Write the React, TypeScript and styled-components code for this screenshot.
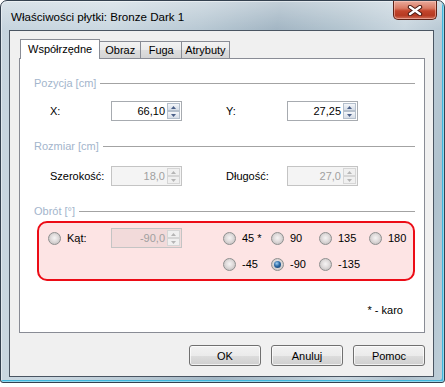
import React from "react";
import styled, { createGlobalStyle } from "styled-components";

const GlobalStyle = createGlobalStyle`
  html, body {
    margin: 0;
    padding: 0;
    background: #ffffff;
  }
  body {
    font-family: "Liberation Sans", Arial, sans-serif;
    font-size: 11px;
    color: #000;
  }
`;

const Window = styled.div`
  width: 445px;
  height: 383px;
  box-sizing: border-box;
  border: 1px solid #34414f;
  border-radius: 7px 7px 3px 3px;
  padding: 0 10px 5px 8px;
  display: flex;
  flex-direction: column;
  background:
    linear-gradient(180deg, rgba(255, 255, 255, 0.35) 0px, rgba(255, 255, 255, 0) 28px),
    linear-gradient(100deg, #c6d4de 0%, #cbd8e1 22%, #b9c9d4 40%, #a3b6c4 55%, #b4c5d0 68%, #c9d6df 80%, #afc1cd 92%, #bfcfd9 100%);
  box-shadow: inset 0 0 0 1px rgba(255, 255, 255, 0.45), inset -2px -2px 0 #3fb6dc;
`;

const TitleBar = styled.div`
  height: 29px;
  display: flex;
  justify-content: space-between;
  align-items: flex-start;
`;

const Title = styled.div`
  margin: 9px 0 0 2px;
  font-size: 11.6px;
  line-height: 14px;
  color: #000;
`;

const CloseButton = styled.div`
  width: 44px;
  height: 19px;
  margin-right: -3px;
  box-sizing: border-box;
  border: 1px solid #5e2116;
  border-top: none;
  border-radius: 0 0 5px 5px;
  background: linear-gradient(180deg, #e9ab9c 0%, #d97a64 40%, #c2452c 55%, #b63a22 80%, #d0705a 100%);
  box-shadow: inset 0 0 0 1px rgba(255, 210, 200, 0.5);
  display: flex;
  align-items: center;
  justify-content: center;
`;

const Client = styled.div`
  flex: 1;
  box-sizing: border-box;
  border: 1px solid #4a5562;
  background: #f0f0f0;
  padding: 8px 8px 9px 9px;
  display: flex;
  flex-direction: column;
`;

const TabRow = styled.div`
  height: 19px;
  display: flex;
  align-items: flex-end;
  padding-left: 1px;
`;

const Tab = styled.div<{ $active?: boolean }>`
  box-sizing: border-box;
  min-width: ${(p) => (p.$active ? "0" : "41px")};
  text-align: center;
  height: ${(p) => (p.$active ? "20px" : "17px")};
  margin-bottom: ${(p) => (p.$active ? "-1px" : "0")};
  position: relative;
  z-index: ${(p) => (p.$active ? 1 : 0)};
  padding: ${(p) => (p.$active ? "2px 7px 0 7px" : "1px 3px 0 3px")};
  border: 1px solid #898c95;
  border-bottom: none;
  border-left-width: ${(p) => (p.$active ? "1px" : "0")};
  background: ${(p) =>
    p.$active ? "#ffffff" : "linear-gradient(180deg, #f3f3f3 0%, #ebebeb 50%, #dedede 51%, #d4d4d4 100%)"};
  line-height: 14px;
  white-space: nowrap;
`;

const Panel = styled.div`
  height: 275px;
  box-sizing: border-box;
  border: 1px solid #898c95;
  background: #ffffff;
  padding: 0 9px 0 14px;
  display: flex;
  flex-direction: column;
`;

const GroupHeader = styled.div<{ $mt: number }>`
  margin-top: ${(p) => p.$mt}px;
  height: 13px;
  line-height: 13px;
  display: flex;
  align-items: center;
  gap: 4px;
  color: #a3b5cc;
  white-space: nowrap;

  &::after {
    content: "";
    flex: 1;
    height: 1px;
    background: #a3a3a3;
  }
`;

const FieldRow = styled.div<{ $mt: number }>`
  margin-top: ${(p) => p.$mt}px;
  padding-left: 16px;
  display: grid;
  grid-template-columns: 61px 71px 44px 61px 71px;
  align-items: center;
  height: 20px;
`;

const Label = styled.span`
  line-height: 13px;
`;

const SpinBox = styled.div<{ $disabled?: boolean }>`
  width: 71px;
  height: 20px;
  box-sizing: border-box;
  border: 1px solid ${(p) => (p.$disabled ? "#c4c4c4" : "#a7abb0")};
  background: ${(p) => (p.$disabled ? "rgba(0, 0, 0, 0.045)" : "#ffffff")};
  display: flex;
  align-items: stretch;
  padding: 1px;
`;

const SpinValue = styled.div<{ $disabled?: boolean }>`
  flex: 1;
  text-align: right;
  padding-right: 2px;
  line-height: 16px;
  color: ${(p) => (p.$disabled ? "#a0a0a0" : "#000")};
`;

const SpinButtons = styled.div`
  width: 13px;
  display: flex;
  flex-direction: column;
`;

const SpinButton = styled.div<{ $disabled?: boolean }>`
  flex: 1;
  box-sizing: border-box;
  border: 1px solid ${(p) => (p.$disabled ? "#d6d6d6" : "#b4bfcc")};
  background: ${(p) =>
    p.$disabled ? "#f0f0f0" : "linear-gradient(180deg, #f5f7fa 0%, #e4e9f0 50%, #d6dde7 100%)"};
  display: flex;
  align-items: center;
  justify-content: center;
  color: ${(p) => (p.$disabled ? "#b5b5b5" : "#4b6089")};
`;

const RedBox = styled.div`
  margin: 3px 0 0 3px;
  height: 60px;
  box-sizing: border-box;
  border: 2px solid #ec0c16;
  border-radius: 10px;
  background: #fde4e4;
  padding: 5px 0 0 9px;
  display: grid;
  grid-template-columns: 63px 71px 41px 48px 48px 50px auto;
  grid-template-rows: 20px 20px;
  row-gap: 6px;
  align-items: center;
`;

const RadioOption = styled.label<{ $col: number; $row: number }>`
  grid-column: ${(p) => p.$col};
  grid-row: ${(p) => p.$row};
  display: flex;
  align-items: center;
  gap: 6px;
  line-height: 13px;
  white-space: nowrap;
`;

const RadioDot = styled.span<{ $checked?: boolean }>`
  width: 13px;
  height: 13px;
  box-sizing: border-box;
  border-radius: 50%;
  border: 1px solid #8e8f8f;
  background: radial-gradient(circle at 50% 45%, #f6f4f4 0%, #e2dede 40%, #b9b5b5 100%);
  display: flex;
  align-items: center;
  justify-content: center;

  &::after {
    content: "";
    display: ${(p) => (p.$checked ? "block" : "none")};
    width: 7px;
    height: 7px;
    border-radius: 50%;
    background: radial-gradient(circle at 40% 35%, #9fd0f2 0%, #2d6aa5 45%, #0f3460 100%);
  }
`;

const SpinCell = styled.div`
  grid-column: 2;
  grid-row: 1;
`;

const KaroNote = styled.div`
  margin-top: 23px;
  padding-right: 12px;
  text-align: right;
  line-height: 13px;
`;

const ButtonRow = styled.div`
  margin-top: 12px;
  display: flex;
  justify-content: flex-end;
  gap: 10px;
`;

const Button = styled.div`
  width: 72px;
  height: 21px;
  box-sizing: border-box;
  border: 1px solid #707070;
  border-radius: 3px;
  background: linear-gradient(180deg, #f2f2f2 0%, #ebebeb 50%, #dddddd 51%, #cfcfcf 100%);
  box-shadow: inset 0 0 0 1px rgba(255, 255, 255, 0.7);
  display: flex;
  align-items: center;
  justify-content: center;
`;

const Arrow = ({ up }: { up?: boolean }) => (
  <svg width="5" height="3" viewBox="0 0 5 3">
    <path d={up ? "M0 3 L2.5 0 L5 3 Z" : "M0 0 L5 0 L2.5 3 Z"} fill="currentColor" />
  </svg>
);

const Spin = ({ value, disabled }: { value: string; disabled?: boolean }) => (
  <SpinBox $disabled={disabled}>
    <SpinValue $disabled={disabled}>{value}</SpinValue>
    <SpinButtons>
      <SpinButton $disabled={disabled}>
        <Arrow up />
      </SpinButton>
      <SpinButton $disabled={disabled}>
        <Arrow />
      </SpinButton>
    </SpinButtons>
  </SpinBox>
);

const angles = [
  { label: "45 *", col: 4, row: 1 },
  { label: "90", col: 5, row: 1 },
  { label: "135", col: 6, row: 1 },
  { label: "180", col: 7, row: 1 },
  { label: "-45", col: 4, row: 2 },
  { label: "-90", col: 5, row: 2, checked: true },
  { label: "-135", col: 6, row: 2 },
];

export default function App() {
  return (
    <>
      <GlobalStyle />
      <Window>
        <TitleBar>
          <Title>Właściwości płytki: Bronze Dark 1</Title>
          <CloseButton>
            <svg width="16" height="11" viewBox="0 0 16 11">
              <path d="M3 2 L13 9 M13 2 L3 9" stroke="#4a1a12" strokeWidth="4.4" strokeLinecap="round" />
              <path d="M3 2 L13 9 M13 2 L3 9" stroke="#ffffff" strokeWidth="2.4" strokeLinecap="round" />
            </svg>
          </CloseButton>
        </TitleBar>
        <Client>
          <TabRow>
            <Tab $active>Współrzędne</Tab>
            <Tab>Obraz</Tab>
            <Tab>Fuga</Tab>
            <Tab>Atrybuty</Tab>
          </TabRow>
          <Panel>
            <GroupHeader $mt={18}>Pozycja [cm]</GroupHeader>
            <FieldRow $mt={11}>
              <Label>X:</Label>
              <Spin value="66,10" />
              <span />
              <Label>Y:</Label>
              <Spin value="27,25" />
            </FieldRow>
            <GroupHeader $mt={19}>Rozmiar [cm]</GroupHeader>
            <FieldRow $mt={13}>
              <Label>Szerokość:</Label>
              <Spin value="18,0" disabled />
              <span />
              <Label>Długość:</Label>
              <Spin value="27,0" disabled />
            </FieldRow>
            <GroupHeader $mt={19}>Obrót [°]</GroupHeader>
            <RedBox>
              <RadioOption $col={1} $row={1}>
                <RadioDot />
                Kąt:
              </RadioOption>
              <SpinCell>
                <Spin value="-90,0" disabled />
              </SpinCell>
              {angles.map((a) => (
                <RadioOption key={a.label} $col={a.col} $row={a.row}>
                  <RadioDot $checked={a.checked} />
                  {a.label}
                </RadioOption>
              ))}
            </RedBox>
            <KaroNote>* - karo</KaroNote>
          </Panel>
          <ButtonRow>
            <Button>OK</Button>
            <Button>Anuluj</Button>
            <Button>Pomoc</Button>
          </ButtonRow>
        </Client>
      </Window>
    </>
  );
}
